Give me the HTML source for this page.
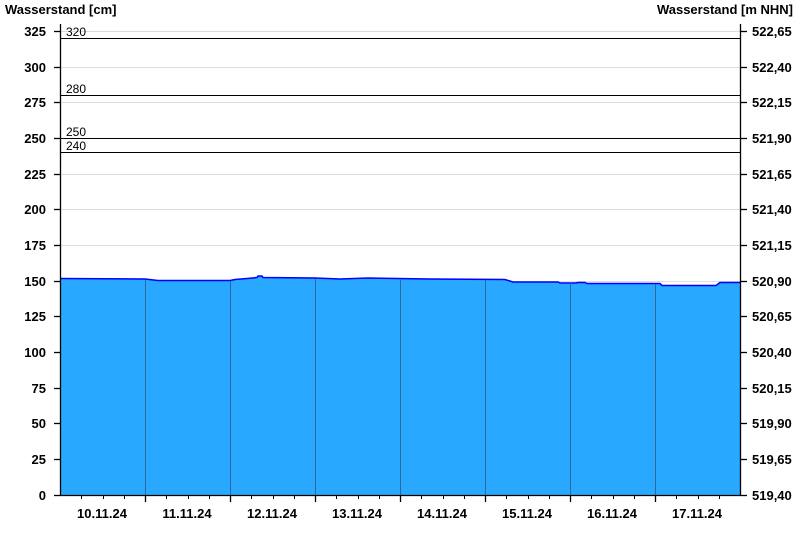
<!DOCTYPE html>
<html><head><style>
html,body{margin:0;padding:0;background:#fff;width:800px;height:550px;overflow:hidden}
svg text{font-family:"Liberation Sans",Arial,sans-serif}
</style></head><body>
<svg width="800" height="550" xmlns="http://www.w3.org/2000/svg">
<text x="5" y="14" font-size="13" font-weight="bold">Wasserstand [cm]</text>
<text x="793" y="14" font-size="13" font-weight="bold" text-anchor="end">Wasserstand [m NHN]</text>
<g stroke="#ddd" stroke-width="1">
<line x1="60" x2="740" y1="31.5" y2="31.5"/><line x1="60" x2="740" y1="67.5" y2="67.5"/>
<line x1="60" x2="740" y1="102.5" y2="102.5"/><line x1="60" x2="740" y1="138.5" y2="138.5"/>
<line x1="60" x2="740" y1="174.5" y2="174.5"/><line x1="60" x2="740" y1="209.5" y2="209.5"/>
<line x1="60" x2="740" y1="245.5" y2="245.5"/><line x1="60" x2="740" y1="281.5" y2="281.5"/>
</g>
<polygon fill="#29a8ff" points="60,278.5 145,279 158,280.5 230,280.5 235,279.5 247,278.5 257,277.5 258,276 262,276 263,277.5 315,278 340,279 368,278 430,279 505,279.5 513,282 558,282 560,283 576,283 578,282.5 585,282.5 587,283.5 660,283.5 662,285.5 716,285.5 720,282.5 740,282.5 740,495 60,495"/>
<polyline fill="none" stroke="#0000ff" stroke-width="1.5" points="60,278.5 145,279 158,280.5 230,280.5 235,279.5 247,278.5 257,277.5 258,276 262,276 263,277.5 315,278 340,279 368,278 430,279 505,279.5 513,282 558,282 560,283 576,283 578,282.5 585,282.5 587,283.5 660,283.5 662,285.5 716,285.5 720,282.5 740,282.5"/>
<g stroke="#2a6a9a" stroke-width="1">
<line x1="145.5" x2="145.5" y1="280" y2="495"/><line x1="230.5" x2="230.5" y1="281" y2="495"/>
<line x1="315.5" x2="315.5" y1="279" y2="495"/><line x1="400.5" x2="400.5" y1="279" y2="495"/>
<line x1="485.5" x2="485.5" y1="280" y2="495"/><line x1="570.5" x2="570.5" y1="283" y2="495"/>
<line x1="655.5" x2="655.5" y1="284" y2="495"/>
</g>
<g stroke="#000" stroke-width="1">
<line x1="60" x2="740" y1="38.5" y2="38.5"/><line x1="60" x2="740" y1="95.5" y2="95.5"/>
<line x1="60" x2="740" y1="138.5" y2="138.5"/><line x1="60" x2="740" y1="152.5" y2="152.5"/>
</g>
<g font-size="12"><text x="66" y="36">320</text><text x="66" y="93">280</text><text x="66" y="136">250</text><text x="66" y="150">240</text></g>
<g stroke="#000" stroke-width="1.3">
<line x1="60.5" x2="60.5" y1="24" y2="496"/><line x1="740.5" x2="740.5" y1="24" y2="496"/>
<line x1="60" x2="741" y1="495.5" y2="495.5"/>
</g>
<g stroke="#000" stroke-width="1.3" id="tl">
<line x1="54" x2="60" y1="31.5" y2="31.5"/><line x1="54" x2="60" y1="67.5" y2="67.5"/><line x1="54" x2="60" y1="102.5" y2="102.5"/><line x1="54" x2="60" y1="138.5" y2="138.5"/><line x1="54" x2="60" y1="174.5" y2="174.5"/><line x1="54" x2="60" y1="209.5" y2="209.5"/><line x1="54" x2="60" y1="245.5" y2="245.5"/><line x1="54" x2="60" y1="281.5" y2="281.5"/><line x1="54" x2="60" y1="316.5" y2="316.5"/><line x1="54" x2="60" y1="352.5" y2="352.5"/><line x1="54" x2="60" y1="388.5" y2="388.5"/><line x1="54" x2="60" y1="423.5" y2="423.5"/><line x1="54" x2="60" y1="459.5" y2="459.5"/><line x1="54" x2="60" y1="495.5" y2="495.5"/>
<line x1="741" x2="747" y1="31.5" y2="31.5"/><line x1="741" x2="747" y1="67.5" y2="67.5"/><line x1="741" x2="747" y1="102.5" y2="102.5"/><line x1="741" x2="747" y1="138.5" y2="138.5"/><line x1="741" x2="747" y1="174.5" y2="174.5"/><line x1="741" x2="747" y1="209.5" y2="209.5"/><line x1="741" x2="747" y1="245.5" y2="245.5"/><line x1="741" x2="747" y1="281.5" y2="281.5"/><line x1="741" x2="747" y1="316.5" y2="316.5"/><line x1="741" x2="747" y1="352.5" y2="352.5"/><line x1="741" x2="747" y1="388.5" y2="388.5"/><line x1="741" x2="747" y1="423.5" y2="423.5"/><line x1="741" x2="747" y1="459.5" y2="459.5"/><line x1="741" x2="747" y1="495.5" y2="495.5"/>
<line x1="145.5" x2="145.5" y1="495" y2="502"/><line x1="230.5" x2="230.5" y1="495" y2="502"/><line x1="315.5" x2="315.5" y1="495" y2="502"/><line x1="400.5" x2="400.5" y1="495" y2="502"/><line x1="485.5" x2="485.5" y1="495" y2="502"/><line x1="570.5" x2="570.5" y1="495" y2="502"/><line x1="655.5" x2="655.5" y1="495" y2="502"/>
</g>
<g stroke="#000" stroke-width="1">
<path d="M81.5 495v4M103.5 495v4M124.5 495v4M166.5 495v4M188.5 495v4M209.5 495v4M251.5 495v4M273.5 495v4M294.5 495v4M336.5 495v4M358.5 495v4M379.5 495v4M421.5 495v4M443.5 495v4M464.5 495v4M506.5 495v4M528.5 495v4M549.5 495v4M591.5 495v4M613.5 495v4M634.5 495v4M676.5 495v4M698.5 495v4M719.5 495v4"/>
</g>
<g font-size="13" font-weight="bold" text-anchor="end">
<text x="46" y="36">325</text><text x="46" y="72">300</text><text x="46" y="107">275</text><text x="46" y="143">250</text><text x="46" y="179">225</text><text x="46" y="214">200</text><text x="46" y="250">175</text><text x="46" y="286">150</text><text x="46" y="321">125</text><text x="46" y="357">100</text><text x="46" y="393">75</text><text x="46" y="428">50</text><text x="46" y="464">25</text><text x="46" y="500">0</text>
</g>
<g font-size="13" font-weight="bold">
<text x="752" y="36">522,65</text><text x="752" y="72">522,40</text><text x="752" y="107">522,15</text><text x="752" y="143">521,90</text><text x="752" y="179">521,65</text><text x="752" y="214">521,40</text><text x="752" y="250">521,15</text><text x="752" y="286">520,90</text><text x="752" y="321">520,65</text><text x="752" y="357">520,40</text><text x="752" y="393">520,15</text><text x="752" y="428">519,90</text><text x="752" y="464">519,65</text><text x="752" y="500">519,40</text>
</g>
<g font-size="13" font-weight="bold" text-anchor="middle">
<text x="102" y="518">10.11.24</text><text x="187" y="518">11.11.24</text><text x="272" y="518">12.11.24</text><text x="357" y="518">13.11.24</text><text x="442" y="518">14.11.24</text><text x="527" y="518">15.11.24</text><text x="612" y="518">16.11.24</text><text x="697" y="518">17.11.24</text>
</g>
</svg>
</body></html>
